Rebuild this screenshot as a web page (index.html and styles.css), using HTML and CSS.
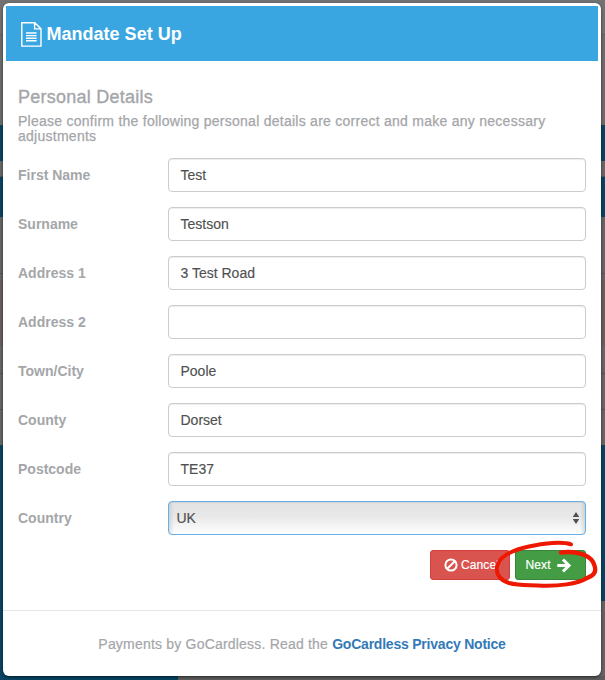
FILE: index.html
```html
<!DOCTYPE html>
<html lang="en">
<head>
<meta charset="utf-8">
<title>Mandate Set Up</title>
<link rel="stylesheet" href="styles.css">
</head>
<body>
<main class="modal">
  <header class="modal-header">
    <svg class="doc-icon" width="21" height="25" viewBox="0 0 21 25" fill="none" stroke="#fff" stroke-width="1.4">
      <path d="M.8.8h13l6.2 6v17.3H.8zM13.6.8v6.1H20M5 11h10.6M5 13.6h10.6M5 16.2h10.6M5 18.8h10.6"/>
    </svg>
    <h1>Mandate Set Up</h1>
  </header>
  <section class="modal-body">
    <h2>Personal Details</h2>
    <p class="intro"><span class="intro-line">Please confirm the following personal details are correct and make any necessary</span> <span class="intro-last">adjustments</span></p>
    <form>
      <div class="row"><label>First Name</label><div class="field">Test</div></div>
      <div class="row"><label>Surname</label><div class="field">Testson</div></div>
      <div class="row"><label>Address 1</label><div class="field">3 Test Road</div></div>
      <div class="row"><label>Address 2</label><div class="field"></div></div>
      <div class="row"><label>Town/City</label><div class="field">Poole</div></div>
      <div class="row"><label>County</label><div class="field">Dorset</div></div>
      <div class="row"><label>Postcode</label><div class="field">TE37</div></div>
      <div class="row"><label>Country</label><div class="field select"><span>UK</span>
        <svg width="8" height="12" viewBox="0 0 8 12" fill="#505050"><path d="M4 0l3.3 5H.7zM4 12l3.3-5H.7z"/></svg></div></div>
    </form>
    <div class="actions">
      <div class="btn cancel">
        <svg width="14" height="14" viewBox="0 0 14 14" fill="none" stroke="#fff" stroke-width="2"><circle cx="7" cy="7" r="5.6"/><path d="M3.2 10.8l7.6-7.6"/></svg>
        <span>Cancel</span>
      </div>
      <div class="btn next">
        <span>Next</span>
        <svg width="14" height="14" viewBox="0 0 14 14" fill="none" stroke="#fff" stroke-width="3"><path d="M.3 7.5H12M6 1.5L12 7.5l-6 6"/></svg>
      </div>
      <svg class="marker" width="110" height="52" viewBox="490 538 110 52" fill="none" stroke="#ee1800" stroke-linecap="round" stroke-linejoin="round">
        <path stroke-width="4" d="M571 544.3C562 541.5 544 543 529 546.5C513 550 500 556 497.5 565C495 574 500 580 509 583C518 585.5 527 585 538 585.5C558 586.5 578 584 587 578"/>
        <path stroke-width="4.4" d="M587 578C596 574.5 597 570 593 562C588 553 572 551 561 552.5"/>
      </svg>
    </div>
  </section>
  <footer class="modal-footer"><span>Payments by GoCardless. Read the <a>GoCardless Privacy Notice</a></span></footer>
</main>
</body>
</html>
```
FILE: styles.css
```css
* { box-sizing: border-box; }
body {
  margin: 0;
  height: 680px;
  padding: 3px 4px 4px 3px;
  overflow: hidden;
  font: 14px/15px "Liberation Sans", Arial, sans-serif;
  color: #a4a6a9;
  background:
    linear-gradient(#5c5c5c, #5c5c5c) 178px 676px / 427px 4px no-repeat,
    linear-gradient(#646464, #646464) 590px 601px / 15px 79px no-repeat,
    linear-gradient(#727272 0 34px, #626262 34px 35px, #6c6c6c 35px 125px, #084463 125px 161px, #686868 161px 176px, #555 176px 177px, #084463 177px 217px, #656565 217px 273px, #555 273px 274px, #656565 274px 280px, #685f5f 280px 346px, #666 346px 373px, #555 373px 374px, #666 374px 409px, #555 409px 410px, #666 410px 445px, #084463 445px);
}
.modal {
  width: 598px;
  height: 673px;
  padding: 3px;
  background: #fff;
  border-radius: 6px;
  box-shadow: 0 1px 3px rgba(0, 0, 0, .6);
}
.modal-header {
  display: flex;
  align-items: center;
  gap: 5px;
  height: 55px;
  padding: 2px 0 0 15px;
  background: #3aa6e1;
  color: #fff;
}
h1, h2, p { margin: 0; font-weight: normal; }
h1 { margin: -2px 0 0 -.4px; font-size: 18px; line-height: 20px; font-weight: bold; }
.modal-body { padding: 26px 12px 0; }
h2 { font-size: 18px; line-height: 20px; letter-spacing: .25px; -webkit-text-stroke: .35px; }
.intro { margin-top: 7px; height: 30px; letter-spacing: .26px; -webkit-text-stroke: .25px; }
.intro-line, .intro-last { display: block; white-space: nowrap; }
form { display: grid; gap: 15px; margin-top: 14px; }
.row { display: grid; grid-template-columns: 150px 418px; height: 34px; align-items: center; }
label { font-weight: bold; }
.field {
  display: flex;
  align-items: center;
  height: 34px;
  padding: 0 11.5px;
  border: 1px solid #ccc;
  border-radius: 4px;
  box-shadow: inset 0 1px 1px rgba(0, 0, 0, .075);
  color: #505050;
  -webkit-text-stroke: .15px;
}
.select {
  justify-content: space-between;
  padding: 0 5px 0 7.5px;
  border-color: #66afe9;
  background: linear-gradient(90deg, rgba(190,190,190,.5), transparent 5px calc(100% - 5px), rgba(190,190,190,.5)), linear-gradient(#e3e3e3, #e8e8e8 45%, #fff);
}
.actions { position: relative; display: flex; justify-content: flex-end; gap: 5px; margin-top: 15px; }
.btn {
  display: flex;
  align-items: center;
  height: 30px;
  border: 1px solid;
  border-radius: 3px;
  color: #fff;
  font-size: 12px;
}
.btn span { letter-spacing: .1px; -webkit-text-stroke: .2px; }
.cancel { width: 80px; padding-left: 13px; gap: 3px; background: #d9534f; border-color: #d43f3a; }
.next { width: 71px; padding-left: 9.5px; gap: 6.5px; background: #449d44; border-color: #398439; }
.next svg { overflow: visible; }
.marker { position: absolute; right: -14px; top: -12px; }
.modal-footer {
  display: flex;
  justify-content: center;
  margin: 30px -3px 0;
  padding-top: 26px;
  border-top: 1px solid #e5e5e5;
  letter-spacing: .2px;
  -webkit-text-stroke: .2px;
}
a { color: #337ab7; font-weight: bold; letter-spacing: -.22px; -webkit-text-stroke: 0; }
```
